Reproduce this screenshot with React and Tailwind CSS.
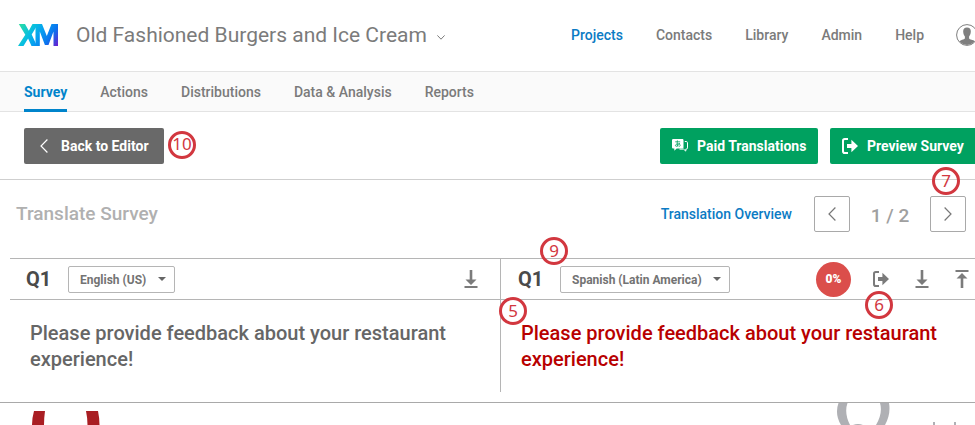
const navTop = ['Contacts', 'Library', 'Admin', 'Help'];
const navTabs = ['Actions', 'Distributions', 'Data & Analysis', 'Reports'];

function Marker({ n, className }) {
  return (
    <span
      className={`absolute z-10 flex size-7 items-center justify-center rounded-full border-3 border-[#d2373f] pb-0.5 font-['Noto_Sans',sans-serif] text-[17px] leading-none text-[#d2373f] ${className}`}
    >
      {n}
    </span>
  );
}

function Logo() {
  return (
    <svg role="img" aria-label="XM" viewBox="0 0 40 22" className="h-[22px] w-10 shrink-0">
      <defs>
        <linearGradient id="xm" gradientUnits="userSpaceOnUse" x1="2" y1="0" x2="38" y2="24">
          <stop offset="0" stopColor="#2bdca4" />
          <stop offset="0.3" stopColor="#08bfe0" />
          <stop offset="0.5" stopColor="#06a0f0" />
          <stop offset="0.75" stopColor="#0a74ee" />
          <stop offset="1" stopColor="#6a1fd0" />
        </linearGradient>
      </defs>
      <path fill="url(#xm)" d="M.8 0H7l3.800 6.800L14.500 0H20L13.700 10.500 19 22h-5.500l-3.400-7.500L5.500 22H0L7.300 10.800Z" />
      <path fill="url(#xm)" d="M17.500 0H24l4.800 12L33.500 0H40v22h-4.500V7.500L30.500 21h-3.600L21.800 7.500V22h-4.300Z" />
    </svg>
  );
}

function Chevron({ dir }) {
  return (
    <svg aria-hidden="true" viewBox="0 0 8 14" fill="none" stroke="currentColor" strokeWidth="1.2" className="h-3.5 w-2">
      <path d={dir === 'left' ? 'M7.400 0.500 1 7l6.400 6.500' : 'M0.600 0.500 7 7l-6.400 6.500'} />
    </svg>
  );
}

function ExportIcon() {
  return (
    <svg aria-hidden="true" viewBox="0 0 16 16" className="size-4">
      <path d="M6 1H2.800C1.700 1 1 1.700 1 2.800v10.400C1 14.300 1.700 15 2.800 15H6" fill="none" stroke="currentColor" strokeWidth="2" />
      <path d="M5 6h4.400V1.800L16 8l-6.600 6.200V10H5Z" fill="currentColor" />
    </svg>
  );
}

function DownloadIcon() {
  return (
    <svg aria-hidden="true" viewBox="0 0 14 18" fill="currentColor" className="h-[18px] w-3.5">
      <path d="M5.700 0h2.600v9.500H12.500L7 15 1.500 9.500h4.200ZM.5 16h13v2H.5Z" />
    </svg>
  );
}

function UploadIcon() {
  return (
    <svg aria-hidden="true" viewBox="0 0 14 18" fill="currentColor" className="h-[18px] w-3.5">
      <path d="M.5 0h13v2H.5ZM7 3l5.500 5.500H8.300V18H5.700V8.500H1.500Z" />
    </svg>
  );
}

function TranslateIcon() {
  return (
    <svg aria-hidden="true" viewBox="0 0 16 13" className="h-[13px] w-4">
      <path d="M1.500 0h8.700c.8 0 1.300.5 1.300 1.300v6.900c0 .8-.5 1.300-1.300 1.300H4.700L2.300 11.800V9.500h-.8C.6 9.500 0 9 0 8.200V1.300C0 .5.600 0 1.500 0Z" fill="currentColor" />
      <path d="M3.200 2.800h5M5.400 1.400c-.3 2.400-.2 4.200.5 6M7.600 3.900C7 6 5.500 7.500 4 7.300c-1.300-.4-.4-2.600 2.300-2.500 2.300.1 2.600 2 .6 2.900" fill="none" stroke="#00a160" strokeWidth=".8" />
      <path d="M12.800 2.500h1.400c.8 0 1.300.5 1.300 1.200v5.200c0 .7-.5 1.200-1.200 1.200h-.5v2l-2.300-2H7.500" fill="none" stroke="currentColor" />
    </svg>
  );
}

function Avatar() {
  return (
    <svg role="img" aria-label="Account" viewBox="0 0 22 22" className="size-[22px] shrink-0 text-[#7f7f7f]">
      <clipPath id="face"><circle cx="11" cy="11" r="10" /></clipPath>
      <circle cx="11" cy="11" r="10.400" fill="none" stroke="currentColor" strokeWidth="1" />
      <path clipPath="url(#face)" fill="currentColor" d="M11 3.400c2.700 0 4 1.700 3.800 4.300-.1 2.200-.8 3.600-1.700 4.700v2c.6 1.100 4.600 1.100 6.400 3.600V22h-17v-4c1.800-2.500 5.800-2.500 6.400-3.600v-2c-.9-1.100-1.600-2.500-1.700-4.700C7 5.100 8.300 3.400 11 3.400Z" />
    </svg>
  );
}

function LanguageSelect({ label, value, className }) {
  return (
    <div className="relative flex items-center">
      <select
        aria-label={label}
        defaultValue={value}
        className={`h-[27px] appearance-none rounded-xs border border-[#b5b5b5] bg-white pt-0.5 pl-[11px] text-xs font-bold text-[#737373] ${className}`}
      >
        <option>{value}</option>
      </select>
      <svg aria-hidden="true" viewBox="0 0 8 4" className="pointer-events-none absolute right-[9px] h-1 w-2 text-[#666]">
        <path d="M0 0h8L4 4Z" fill="currentColor" />
      </svg>
    </div>
  );
}

const question = 'Please provide feedback about your restaurant experience!';

export default function App() {
  return (
    <div className="relative flex min-h-screen flex-col overflow-hidden bg-white font-[Roboto,sans-serif] text-sm text-[#7b7b7b]">
      <header className="-mr-[3px] flex h-[71px] items-center pb-px pl-[18px]">
        <Logo />
        <button type="button" className="ml-[18px] flex items-center gap-2.5 text-[21px] leading-7 whitespace-nowrap">
          Old Fashioned Burgers and Ice Cream
          <svg aria-hidden="true" viewBox="0 0 8 5" fill="none" stroke="currentColor" className="mt-1 h-[5px] w-2">
            <path d="m.4.4 3.600 3.800L7.600.4" />
          </svg>
        </button>
        <nav aria-label="Main" className="ml-auto flex gap-[33px] font-medium">
          <a href="#projects" className="text-[#0b7bc4]">Projects</a>
          {navTop.map((t) => <a key={t} href={`#${t}`}>{t}</a>)}
        </nav>
        <a href="#account" className="ml-8"><Avatar /></a>
      </header>

      <nav aria-label="Survey sections" className="flex h-[41px] gap-[33px] border-y border-[#e3e3e3] bg-[#fafafa] pl-6 font-medium">
        <a href="#survey" aria-current="page" className="-mb-px flex items-center border-b-3 border-[#0084cb] pt-0.5 font-bold text-[#0084cb]">Survey</a>
        {navTabs.map((t) => <a key={t} href={`#${t}`} className="flex items-center">{t}</a>)}
      </nav>

      <div className="-mr-3 flex h-[68px] items-center border-b border-[#cfcfcf] pl-6">
        <div className="relative">
          <button type="button" className="flex h-9 w-[140px] items-center gap-[13px] rounded-xs bg-[#696969] pl-4 font-bold whitespace-nowrap text-white">
            <Chevron dir="left" />
            Back to Editor
          </button>
          <Marker n="10" className="top-[3px] left-36" />
        </div>
        <div className="ml-auto flex gap-3 font-bold whitespace-nowrap text-white">
          <button type="button" className="flex h-9 w-[158px] items-center gap-[9px] rounded-xs bg-[#00a160] pl-3">
            <TranslateIcon />
            Paid Translations
          </button>
          <button type="button" className="flex h-9 w-[157px] items-center gap-[9px] rounded-xs bg-[#00a160] pl-3">
            <ExportIcon />
            Preview Survey
          </button>
        </div>
      </div>

      <div className="flex h-[78px] items-center pr-[9px] pb-2.5 pl-4">
        <h1 className="text-[19px] font-medium text-[#b0b0b0]">Translate Survey</h1>
        <a href="#overview" className="ml-auto font-medium text-[#0b7bc4]">Translation Overview</a>
        <button type="button" aria-label="Previous page" className="ml-[22px] flex size-9 items-center justify-center rounded-xs border border-[#a9a9a9] text-[#777]">
          <Chevron dir="left" />
        </button>
        <span className="w-20 pt-1 text-center text-[19px] font-medium text-[#a0a0a0]">1 / 2</span>
        <div className="relative">
          <button type="button" aria-label="Next page" className="flex size-9 items-center justify-center rounded-xs border border-[#a9a9a9] text-[#777]">
            <Chevron dir="right" />
          </button>
          <Marker n="7" className="-top-[29px] left-0.5" />
        </div>
      </div>

      <main className="ml-2.5 grid grid-cols-[491px_1fr] pb-2.5">
        <section className="border-r border-[#b5b5b5]">
          <div className="flex h-[42px] items-center border-y border-[#b5b5b5] pl-4">
            <h2 className="w-[42px] text-xl font-bold text-[#4a4a4a]">Q1</h2>
            <LanguageSelect label="Source language" value="English (US)" className="w-[107px]" />
            <button type="button" aria-label="Download source" className="mr-[22px] ml-auto"><DownloadIcon /></button>
          </div>
          <p className="min-h-[92px] pt-5 pr-8 pl-5 text-xl leading-[26px] font-medium text-[#666]">{question}</p>
        </section>
        <section className="relative">
          <div className="flex h-[42px] items-center border-y border-[#b5b5b5] pl-[17px]">
            <h2 className="w-[42px] text-xl font-bold text-[#4a4a4a]">Q1</h2>
            <LanguageSelect label="Target language" value="Spanish (Latin America)" className="w-[170px]" />
            <div className="mr-1.5 ml-auto flex items-center">
              <span className="flex size-[35px] items-center justify-center rounded-full bg-[#db4e4b] text-xs font-black text-white">0%</span>
              <button type="button" aria-label="Export translation" className="ml-[22px]"><ExportIcon /></button>
              <button type="button" aria-label="Download translation" className="ml-[26px]"><DownloadIcon /></button>
              <button type="button" aria-label="Upload translation" className="ml-[26px]"><UploadIcon /></button>
            </div>
          </div>
          <p className="pt-5 pr-5 pl-5 text-xl leading-[26px] font-medium text-[#b80000]">{question}</p>
          <Marker n="9" className="-top-[21px] left-[39px]" />
          <Marker n="5" className="top-[39px] -left-[2px]" />
          <Marker n="6" className="top-[33px] right-[82px]" />
        </section>
      </main>

      <footer className="flex h-[23px] justify-between overflow-hidden border-t border-[#a9a9a9]">
        <svg aria-hidden="true" viewBox="0 0 70 14" className="mt-2 ml-8 h-3.5 w-[70px]">
          <path fill="#a91e23" d="M2 0h11q-1 7-1 14H0Q0 7 2 0ZM54 0h12q1.500 7 1.500 14h-12Q55.500 7 54 0Z" />
        </svg>
        <svg aria-hidden="true" viewBox="0 0 140 22" className="h-[22px] w-[140px]">
          <path fill="#afb0b4" d="M3.500 0h9Q9 10 15 22H6Q-.5 11 3.500 0ZM45 0h9Q56 11 50 22H41Q48 10 45 0Z" />
          <path fill="#afb0b4" d="M18 22q5-2 10 0ZM98 19h2v3h-2ZM119 19h2v3h-2Z" />
        </svg>
      </footer>
    </div>
  );
}
